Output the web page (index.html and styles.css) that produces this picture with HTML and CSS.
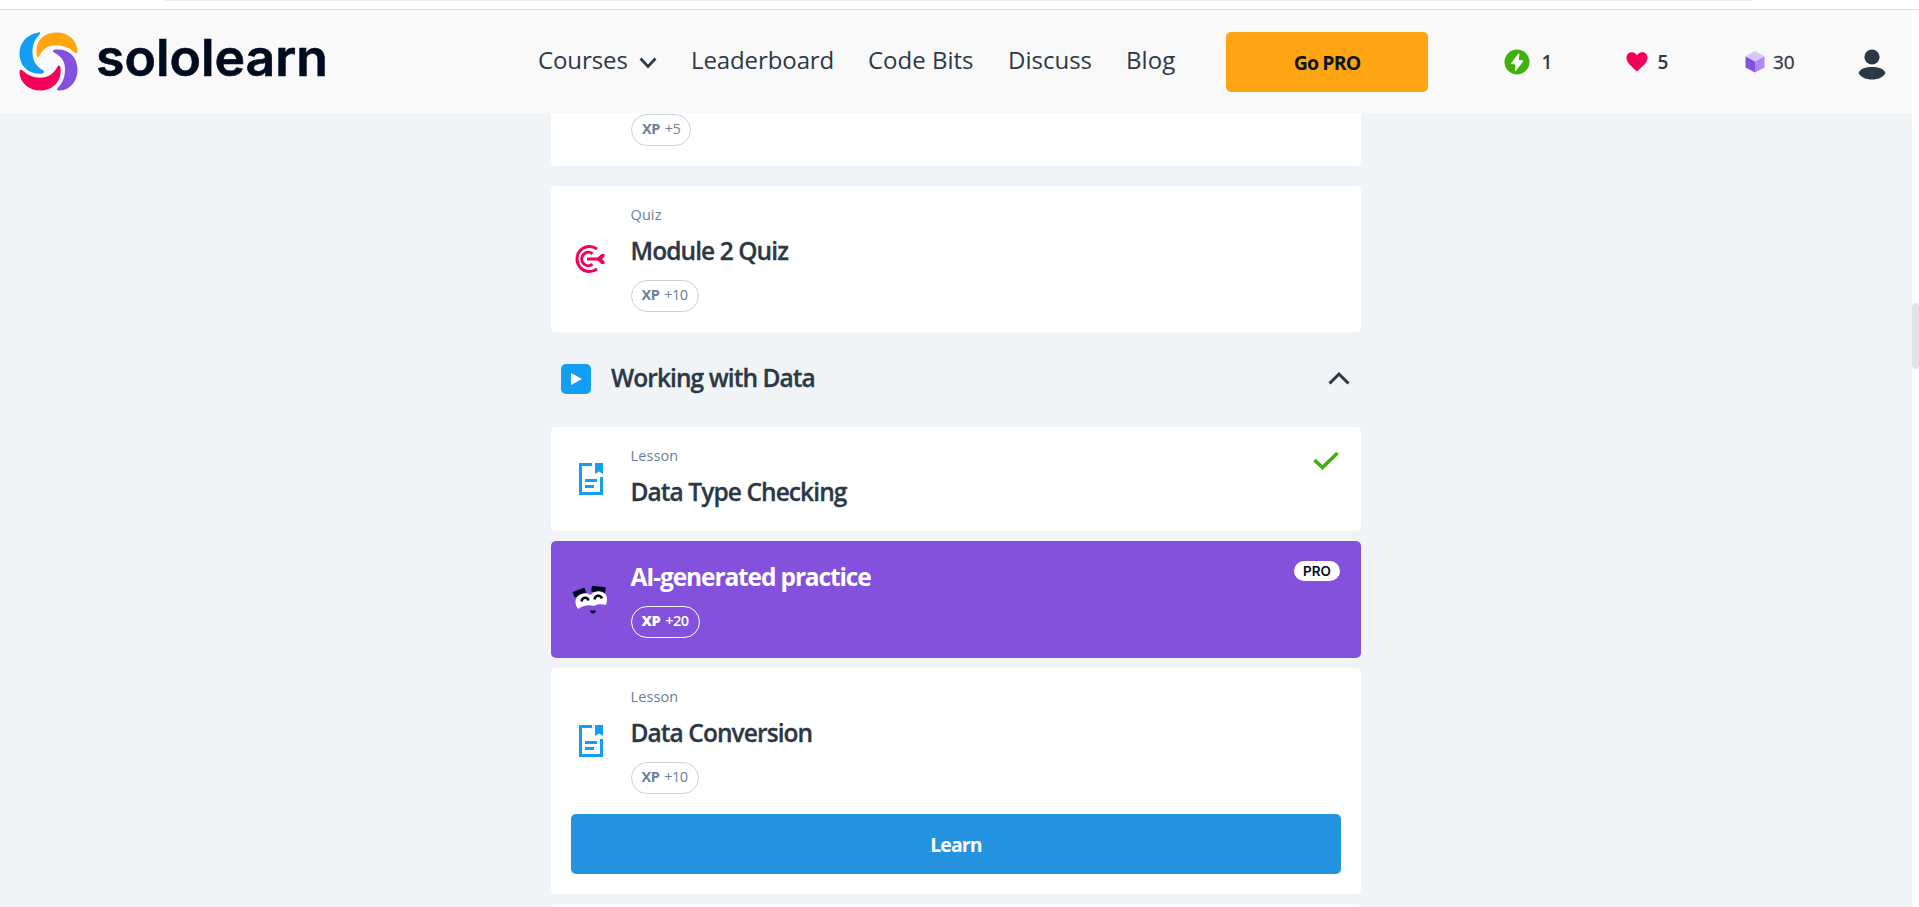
FILE: index.html
```
<!DOCTYPE html>
<html lang="en">
<head>
<meta charset="utf-8">
<title>Sololearn</title>
<link rel="stylesheet" href="styles.css">
</head>
<body>
<svg class="defs" width="0" height="0">
  <symbol id="lesson" viewBox="0 0 24 32">
    <path d="M13 1.5H1.500V30.500H22.500V14" fill="none" stroke="#149ef2" stroke-width="3"/>
    <path d="M16 0h8v11l-4-2.500-4 2.500zM6 16h12v3H6zM6 22h9v3H6z" fill="#149ef2"/>
  </symbol>
</svg>
<div class="chrome"><div class="chrome-edge"></div></div>
<div class="window">
<div class="page">
  <header class="header">
    <a class="brand">
      <svg width="59" height="59" viewBox="0 0 59 59">
        <path d="M17.500 1C7 3 .5 11.500.500 21.500C.500 33 8 41.500 20 41.800C23.500 42 26 41 24.500 38.500C16 34 13.500 28 13.500 20C13.500 12 16 7 21 2C21.500 0 20 0 17.500 1Z" fill="#149ef2"/>
        <path d="M17.500 22C16.500 9 24 .5 38.500.500C49 .5 57.500 8 58.500 18C58.800 22 57 21.500 55 20C50 15.500 44 13.300 37 13.300C29 13.300 25 16 20.500 23.500C18.500 26 17.500 25.500 17.500 22Z" fill="#ffa514"/>
        <path d="M38 17.500C50 17 58.500 25 58.500 38C58.500 49 51 58 41 58.500C37.500 59 37.500 57.500 39 55.500C44.500 50 46 44 46 37C46 29 42 24 35 20.500C33 18.500 34 17.500 38 17.500Z" fill="#8351dc"/>
        <path d="M41.500 36C43 49 34 58.500 21.500 58.500C10 58.500 1 51 .5 40.500C.3 37.500 2 37 4 39C9 43.500 14.500 45.700 21 45.700C29 45.700 34 42.500 38 35.500C40 32.500 41 33 41.500 36Z" fill="#f40058"/>
      </svg>
      <svg class="wordmark" width="240" height="72"><text x="0" y="49" textLength="232" lengthAdjust="spacingAndGlyphs">sololearn</text></svg>
    </a>
    <nav class="nav">
      <a class="courses">Courses<svg width="18" height="12" viewBox="0 0 18 12"><path d="M1.500 1.500L9 9.500L16.500 1.500" fill="none" stroke="#2d3846" stroke-width="2.600"/></svg></a>
      <a class="leader">Leaderboard</a>
      <a class="bits">Code Bits</a>
      <a class="discuss">Discuss</a>
      <a class="blog">Blog</a>
    </nav>
    <button class="go-pro">Go PRO</button>
    <div class="stat streak">
      <svg width="26" height="26" viewBox="0 0 26 26"><circle cx="13" cy="13" r="12.500" fill="#3fb00c"/><path d="M14.800 5L7.500 14.500L12 14.800L11.500 21.500L18.800 12L14.200 11.300Z" fill="#fff" stroke="#fff" stroke-width="1.200" stroke-linejoin="round"/></svg>1
    </div>
    <div class="stat hearts">
      <svg width="22" height="20" viewBox="0 0 22 20"><path d="M11 19.500C7 15.500.500 11 .5 6C.5-.5 8-1.500 11 3.200C14-1.500 21.500-.5 21.500 6C21.500 11 15 15.500 11 19.500Z" fill="#f40058"/></svg>5
    </div>
    <div class="stat bits-count">
      <svg width="20" height="22" viewBox="0 0 20 22"><path d="M10 0L19.500 5.500L10 10.500L.500 5.500Z" fill="#d6c8fa"/><path d="M.5 5.500L10 10.500V21.500L.500 16.500Z" fill="#8351dc"/><path d="M19.500 5.500L10 10.500V21.500L19.500 16.500Z" fill="#ad88f5"/></svg>30
    </div>
    <svg class="user" width="28" height="32" viewBox="0 0 28 32"><circle cx="14" cy="8" r="7.600" fill="#2d3846"/><path d="M.5 24C2 19.500 8 18 14 18S26 19.500 27.500 24C25 28.500 20 30.500 14 30.500S3 28.500.500 24Z" fill="#2d3846"/></svg>
  </header>

  <main class="list">
    <section class="card cut-top"><div class="pill"><b>XP</b><span>+5</span></div></section>

    <section class="card quiz">
      <div class="icon"><svg width="32" height="30" viewBox="0 0 32 30"><g fill="none" stroke="#f40058" stroke-width="3"><path d="M24 5A12.500 12.500 0 1 0 24 25"/><path d="M19.500 9.700A6.700 6.700 0 1 0 19.500 20.300"/><path d="M14 15H26"/></g><path d="M24 14L28.500 10H31.500V12.500L29 15L31.500 17.500V20H28.500L24 16Z" fill="#f40058"/></svg></div>
      <div class="body"><div class="label">Quiz</div><h3>Module 2 Quiz</h3><div class="pill"><b>XP</b><span>+10</span></div></div>
    </section>

    <div class="section-head">
      <svg width="30" height="30" viewBox="0 0 30 30"><rect width="30" height="30" rx="5" fill="#149ef2"/><path d="M10 9L21 15L10 21Z" fill="#fff"/></svg>
      <h2>Working with Data</h2>
      <svg class="chevron" width="22" height="14" viewBox="0 0 22 14"><path d="M1.500 12.500L11 3L20.500 12.500" fill="none" stroke="#2d3846" stroke-width="3"/></svg>
    </div>

    <section class="card checking">
      <div class="icon"><svg width="24" height="32"><use href="#lesson"/></svg></div>
      <div class="body"><div class="label">Lesson</div><h3>Data Type Checking</h3></div>
      <svg class="check" width="26" height="20" viewBox="0 0 26 20"><path d="M1.500 9L9.500 16.500L24.500 2" fill="none" stroke="#3fb00c" stroke-width="3.600"/></svg>
    </section>

    <section class="card practice">
      <div class="icon"><svg width="36" height="30" viewBox="0 0 36 30">
        <path d="M1.500 7.500L12 3.500L13.500 7.500L3 11.500ZM20.500 1.500L33 3L32.300 7.500L20 6Z" fill="#000b20" stroke="#000b20" stroke-width="1.500" stroke-linejoin="round"/>
        <path d="M3.500 17C3.500 10 12 5.500 18.500 10C24 3.500 35 6 35 14C35 16.500 34.500 18.500 34 20C29.500 18.500 25 19 22 21C17.500 19.500 10.500 20 6.500 24C4.500 22 3.500 20 3.500 17Z" fill="#fff"/>
        <path d="M9.500 16.500C10 12 15.500 11.500 16.500 15.500M22.500 14.500C23 10 28.500 9.500 30 13.500" fill="none" stroke="#000b20" stroke-width="2.500"/>
        <path d="M18 25.500H24C23.500 29.500 18.500 29.500 18 25.500Z" fill="#000b20"/></svg></div>
      <div class="body"><h3>AI-generated practice</h3><div class="pill"><b>XP</b><span>+20</span></div></div>
      <span class="pro">PRO</span>
    </section>

    <section class="card learnable">
      <div class="row">
        <div class="icon"><svg width="24" height="32"><use href="#lesson"/></svg></div>
        <div class="body"><div class="label">Lesson</div><h3>Data Conversion</h3><div class="pill"><b>XP</b><span>+10</span></div></div>
      </div>
      <button class="learn">Learn</button>
    </section>

    <section class="card next"></section>
  </main>
</div>
<div class="track"><div class="thumb"></div></div>
</div>
</body>
</html>
```
FILE: styles.css
```
* { box-sizing: border-box; margin: 0; }
body { height: 907px; overflow: hidden; background: #fff; color: #2d3846; font-family: "Open Sans", "Noto Sans", sans-serif; }
.defs { display: none; }
.chrome { height: 10px; border-bottom: 1px solid #dfe0e1; }
.chrome-edge { width: 1588px; height: 1px; margin-left: 165px; background: #e9edf8; }
.window { display: flex; height: 897px; }
.page { width: 1912px; background: #f0f4f7; overflow: hidden; }
.track { width: 7px; padding-top: 293px; }
.thumb { height: 66px; border-radius: 4px; background: #dfe4e8; }

.header { display: flex; height: 103px; background: #f9f9f9; }
.brand { display: flex; width: 538px; padding: 22px 0 0 18.500px; }
.wordmark { margin: -5px 0 0 18px; }
.wordmark text { font: 600 51px Inter, sans-serif; fill: #000b20; stroke: #000b20; stroke-width: .6px; stroke-linejoin: round; }
.nav { display: flex; width: 688px; padding-top: 32px; font-size: 24px; line-height: 36px; letter-spacing: -.1px; white-space: nowrap; }
.nav a { flex: none; }
.courses { width: 153px; }
.courses svg { margin-left: 11px; }
.leader { width: 177px; }
.bits { width: 140px; letter-spacing: 0; }
.discuss { width: 118px; letter-spacing: 0; }
.blog { letter-spacing: .1px; }
button { border: 0; border-radius: 5px; font: 700 19.500px "Open Sans", "Noto Sans", sans-serif; letter-spacing: -.9px; height: 60px; padding: 0; }
.go-pro { width: 202px; margin-top: 22px; background: #ffa514; color: #0e141e; }
.stat { display: flex; align-items: center; height: 103px; font-size: 19px; font-weight: 600; }
.streak { width: 122px; margin-left: 75.500px; gap: 12px; }
.hearts { width: 119.500px; gap: 10px; }
.bits-count { width: 112.500px; gap: 8px; font-weight: 500; -webkit-text-stroke: .3px; }
.user { margin-top: 39px; }

.list { width: 810px; margin-left: 551px; }
.card { display: flex; padding: 20px; border-radius: 5px; background: #fff; }
.cut-top { height: 53px; padding: 1px 0 0 80px; border-radius: 0 0 5px 5px; }
.quiz { height: 146px; margin-top: 20px; }
.icon { display: flex; align-items: center; justify-content: center; width: 40px; }
.quiz .icon svg { margin-left: -5px; }
.body { flex: 1; padding-left: 19.500px; }
.label { height: 28px; font-size: 14.500px; line-height: 18px; color: #6b7f99; letter-spacing: .1px; }
h2, h3 { font-size: 24.500px; font-weight: 600; line-height: 34px; letter-spacing: -.92px; white-space: nowrap; -webkit-text-stroke: .3px; }
.pill { display: flex; align-items: center; width: max-content; height: 32px; padding: 0 10px 3px; gap: 5px; border: 1px solid #c8d2db; border-radius: 16px; font-size: 14.500px; letter-spacing: -.5px; color: #6b7f99; }
.body .pill { margin-top: 12px; }
.section-head { display: flex; align-items: center; height: 95px; padding: 0 11px 2px 10px; }
.section-head h2 { flex: 1; padding: 0 0 2px 20px; }
.chevron { margin-bottom: 1px; }
.checking { height: 104px; }
.check { margin: 4px 2px 0 0; }
.practice { height: 117px; margin-top: 10px; background: #8351dc; color: #fff; }
.practice .icon svg { margin-left: -2px; }
.practice h3 { margin-top: -1px; font-weight: 700; letter-spacing: -1.130px; -webkit-text-stroke: 0; }
.practice .pill { border-color: #fff; color: #fff; font-weight: 600; }
.pro { width: 46px; height: 20px; margin-right: 1px; border-radius: 10px; background: #fff; color: #000b20; font: 600 13.500px/20px Inter, sans-serif; text-align: center; }
.learnable { flex-direction: column; gap: 20px; height: 226px; margin-top: 10px; }
.row { display: flex; height: 106px; }
.learn { background: #2493df; color: #fff; }
.next { height: 60px; margin-top: 10px; background: #fafbfc; }
```
